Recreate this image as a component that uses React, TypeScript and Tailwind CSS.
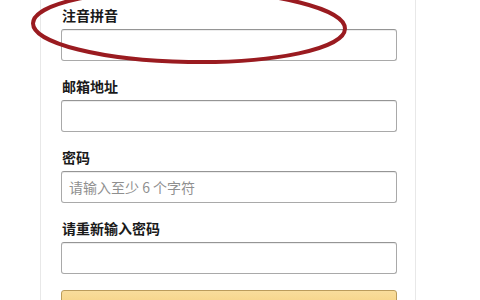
import React from "react";

const font = { fontFamily: '"Noto Sans CJK SC", "Noto Sans", sans-serif' };

function Field({ label, placeholder }: { label: string; placeholder?: string }) {
  return (
    <div className="flex flex-col">
      <label className="text-[14px] leading-[20px] font-bold text-[#1a1a1a] pl-[1px]">{label}</label>
      <div className="mt-[4px] h-[32px] rounded-[3px] border border-[#a9a9a9] border-t-[#959595] bg-white shadow-[inset_0_1px_0_rgba(0,0,0,0.07)] flex items-center pl-[7px]">
        {placeholder && <span className="text-[14px] text-[#8f8f8f]">{placeholder}</span>}
      </div>
    </div>
  );
}

export default function App() {
  return (
    <div className="relative w-[480px] h-[300px] overflow-hidden bg-white" style={font}>
      <div className="ml-[40px] w-[376px] h-full border-l border-r border-[#e8e8e8] pl-[20px] pr-[18px] pt-[5px] flex flex-col gap-[15px]">
        <Field label="注音拼音" />
        <Field label="邮箱地址" />
        <Field label="密码" placeholder="请输入至少 6 个字符" />
        <Field label="请重新输入密码" />
        <div className="h-[31px] shrink-0 rounded-[3px] border border-[#bb9c5c] bg-gradient-to-b from-[#f9dd9c] to-[#f3c96e] mt-[1px]" />
      </div>
      <svg className="absolute left-0 top-0" width="480" height="100" viewBox="0 0 480 100">
        <ellipse cx="189" cy="26" rx="156" ry="36" fill="none" stroke="#9a1b20" strokeWidth="4" transform="rotate(1 189 26)" />
      </svg>
    </div>
  );
}
